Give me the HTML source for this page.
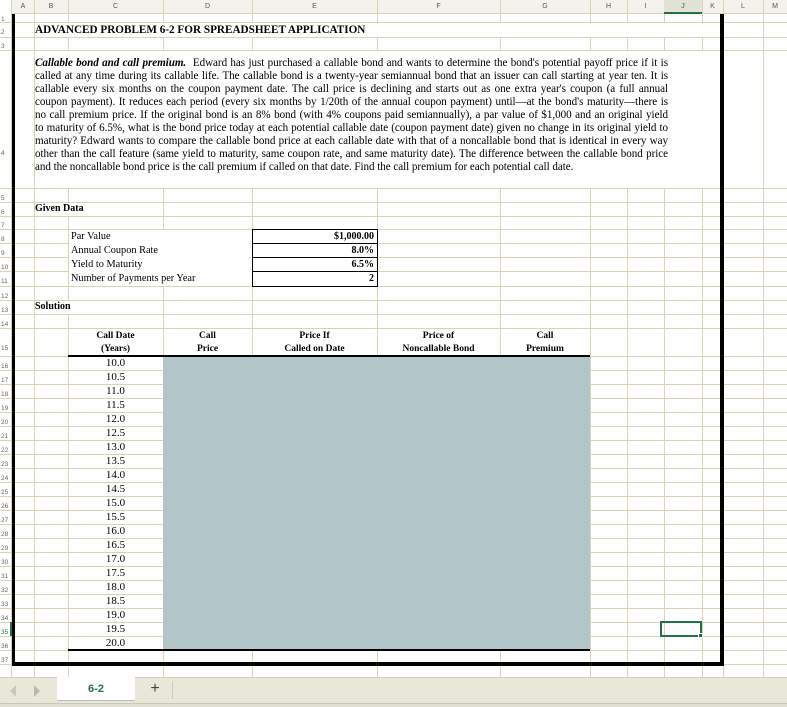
<!DOCTYPE html>
<html><head><meta charset="utf-8"><style>
*{margin:0;padding:0;box-sizing:border-box}
body{width:787px;height:707px;overflow:hidden;background:#fff;position:relative;font-family:"Liberation Serif",serif;color:#000}
.a{position:absolute}
.v{position:absolute;width:1px;background:#d8d4b4}
.h{position:absolute;height:1px;background:#d8d4b4}
.ch{position:absolute;top:0;height:14px;font:7px "Liberation Sans",sans-serif;color:#555;text-align:center;line-height:14px}
.rh{position:absolute;left:0;width:12px;font:6.5px "Liberation Sans",sans-serif;color:#666;text-align:left;padding-left:1px}
.t{position:absolute;font-size:11px;white-space:nowrap}
.b{font-weight:bold}
.p{position:absolute;left:35px;width:633px;font-size:11.1px;line-height:13px;white-space:nowrap}
.p div{text-align:justify;text-align-last:justify;letter-spacing:-0.05px}
.hd{position:absolute;font-weight:bold;font-size:9.5px;text-align:center;line-height:13px}
.n{position:absolute;left:68px;width:95px;text-align:center;font-size:11px;line-height:14px}
</style></head><body>
<div class="a" style="left:0;top:0;width:787px;height:14px;background:#f3f2ec;border-bottom:1px solid #d8d4b4"></div>
<div class="a" style="left:0;top:0;width:12px;height:707px;background:#fff;border-right:1px solid #d8d4b4"></div>
<div id="grid"></div>
<script>
var cols=[12,34,68,163,252,377,500,590,627,664,702,723,763,787];
var names=['A','B','C','D','E','F','G','H','I','J','K','L','M'];
var rows=[14,22,37,50,188,202,216,229,243,257,271,286,300,314,328,356];
for(var i=16;i<=37;i++)rows.push(356+(i-15)*14);
rows.push(677);
var g='';
for(var i=0;i<names.length;i++){g+='<div class="ch" style="left:'+cols[i]+'px;width:'+(cols[i+1]-cols[i])+'px;'+(names[i]=='J'?'color:#217346;background:#e2e2d6;border-bottom:2px solid #217346;':'')+'">'+names[i]+'</div>';
 g+='<div class="v" style="left:'+cols[i+1]+'px;top:0;height:677px"></div>';}
for(var r=1;r<rows.length-1;r++){g+='<div class="h" style="left:0;width:787px;top:'+rows[r]+'px"></div>';
 var y0=rows[r-1],y1=rows[r];
 g+='<div class="rh" style="top:'+y0+'px;height:'+(y1-y0)+'px;line-height:'+((y1-y0)*1.5)+'px;'+(r==35?'color:#217346;border-right:2px solid #217346;':'')+'">'+r+'</div>';}
document.getElementById('grid').innerHTML=g;
</script>
<div class="a" style="left:35px;top:23px;width:685px;height:14px;background:#fff"></div>
<div class="a" style="left:35px;top:51px;width:685px;height:137px;background:#fff"></div>
<div class="a" style="left:35px;top:203px;width:60px;height:13px;background:#fff"></div>
<div class="a" style="left:35px;top:301px;width:60px;height:13px;background:#fff"></div>
<div class="a" style="left:69px;top:230px;width:183px;height:56px;background:#fff"></div>
<div class="a" style="left:163px;top:356px;width:427px;height:294px;background:#b2c5c8"></div>
<div class="a" style="left:68px;top:355px;width:522px;height:2px;background:#000"></div>
<div class="a" style="left:68px;top:649px;width:522px;height:2px;background:#000"></div>
<div class="a" style="left:12px;top:14px;width:3px;height:652px;background:#000"></div>
<div class="a" style="left:720px;top:14px;width:4px;height:652px;background:#000"></div>
<div class="a" style="left:12px;top:662px;width:712px;height:4px;background:#000"></div>

<div class="t b" style="left:35px;top:23px;font-size:11.2px;line-height:14px">ADVANCED PROBLEM 6-2 FOR SPREADSHEET APPLICATION</div>
<div class="p" style="top:57px">
<div><b><i>Callable bond and call premium.</i></b>&nbsp; Edward has just purchased a callable bond and wants to determine the bond's potential payoff price if it is</div>
<div>called at any time during its callable life. The callable bond is a twenty-year semiannual bond that an issuer can call starting at year ten. It is</div>
<div>callable every six months on the coupon payment date. The call price is declining and starts out as one extra year's coupon (a full annual</div>
<div>coupon payment). It reduces each period (every six months by 1/20th of the annual coupon payment) until—at the bond's maturity—there is</div>
<div>no call premium price. If the original bond is an 8% bond (with 4% coupons paid semiannually), a par value of $1,000 and an original yield</div>
<div>to maturity of 6.5%, what is the bond price today at each potential callable date (coupon payment date) given no change in its original yield to</div>
<div>maturity? Edward wants to compare the callable bond price at each callable date with that of a noncallable bond that is identical in every way</div>
<div>other than the call feature (same yield to maturity, same coupon rate, and same maturity date). The difference between the callable bond price</div>
<div style="text-align-last:left">and the noncallable bond price is the call premium if called on that date. Find the call premium for each potential call date.</div>
</div>
<div class="t b" style="left:35px;top:202px;font-size:10px;line-height:14px">Given Data</div>
<div class="t b" style="left:35px;top:300px;font-size:10px;line-height:14px">Solution</div>
<div class="t" style="left:71px;top:230px;font-size:10.3px;line-height:14px">Par Value<br>Annual Coupon Rate<br>Yield to Maturity<br>Number of Payments per Year</div>
<div class="a" style="left:252px;top:229px;width:126px;height:58px;border:1px solid #000"></div>
<div class="a" style="left:252px;top:243px;width:126px;height:1px;background:#000"></div>
<div class="a" style="left:252px;top:257px;width:126px;height:1px;background:#000"></div>
<div class="a" style="left:252px;top:271px;width:126px;height:1px;background:#000"></div>
<div class="t b" style="left:253px;top:230px;width:121px;text-align:right;font-size:10px;line-height:14px">$1,000.00<br>8.0%<br>6.5%<br>2</div>

<div class="hd" style="left:68px;width:95px;top:330px">Call Date<br>(Years)</div>
<div class="hd" style="left:163px;width:89px;top:330px">Call<br>Price</div>
<div class="hd" style="left:252px;width:125px;top:330px">Price If<br>Called on Date</div>
<div class="hd" style="left:377px;width:123px;top:330px">Price of<br>Noncallable Bond</div>
<div class="hd" style="left:500px;width:90px;top:330px">Call<br>Premium</div>
<div id="nums"></div>
<script>
var s='';for(var i=0;i<21;i++){s+='<div class="n" style="top:'+(356+i*14)+'px">'+(10+i*0.5).toFixed(1)+'</div>';}
document.getElementById('nums').innerHTML=s;
</script>
<div class="a" style="left:660px;top:621px;width:42px;height:16px;border:2px solid #217346"></div>
<div class="a" style="left:698px;top:633px;width:5px;height:5px;background:#217346;border:1px solid #fff"></div>
<div class="a" style="left:0;top:677px;width:787px;height:30px;background:#e9e8d8;border-top:1px solid #d0cfbf"></div>
<div class="a" style="left:0;top:703px;width:787px;height:4px;background:#e0dfd0;border-top:1px solid #c8c7b8"></div>
<div class="a" style="left:10px;top:685px;width:0;height:0;border-top:6px solid transparent;border-bottom:6px solid transparent;border-right:6px solid #c8c8c0"></div>
<div class="a" style="left:34px;top:685px;width:0;height:0;border-top:6px solid transparent;border-bottom:6px solid transparent;border-left:6px solid #b8b8b0"></div>
<div class="a" style="left:57px;top:677px;width:78px;height:24px;background:#fff;border-bottom:1px solid #bbb;font:bold 11px 'Liberation Sans',sans-serif;color:#217346;text-align:center;line-height:24px">6-2</div>
<div class="a" style="left:147px;top:678px;width:16px;font:16px 'Liberation Sans',sans-serif;color:#444;text-align:center;line-height:22px">+</div>
<div class="a" style="left:172px;top:681px;width:1px;height:18px;background:#ccc"></div>
</body></html>
